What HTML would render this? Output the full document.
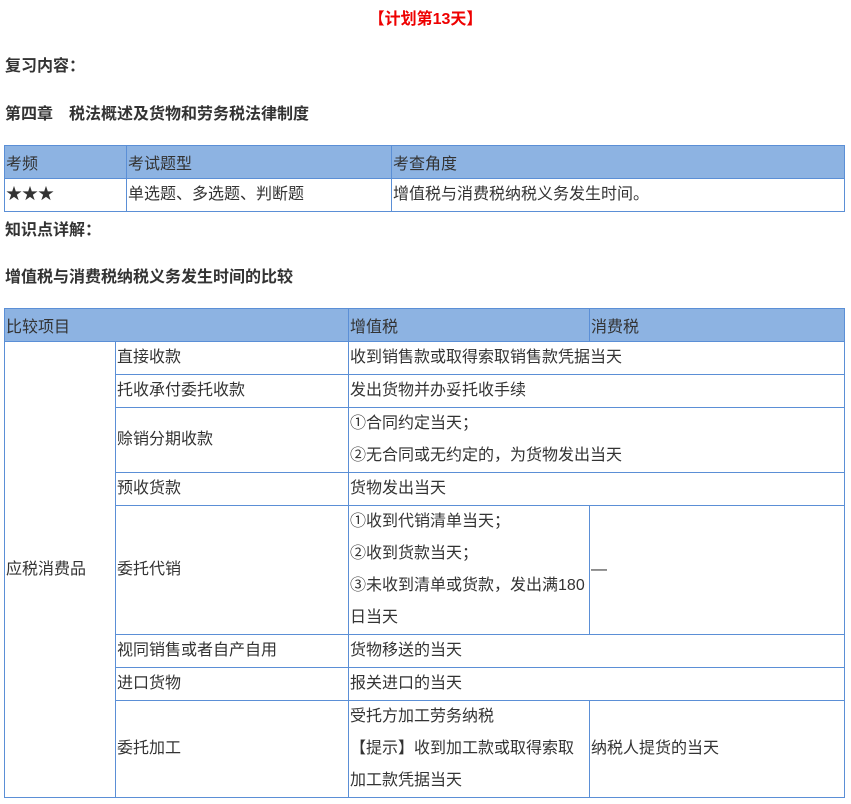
<!DOCTYPE html><html><head><meta charset="utf-8"><style>
body{margin:0;background:#fff;font-family:"Liberation Sans","Noto Sans CJK SC",sans-serif;font-size:16px;color:#333;width:851px;height:804px;overflow:hidden;position:relative}
.a{position:absolute}
table{position:absolute;border-collapse:collapse;table-layout:fixed}
td{border:1px solid #5b8fd6;padding:0 0 0 1px;vertical-align:middle;line-height:32px;white-space:nowrap;overflow:hidden}
th{background:#8db3e2;border:1px solid #5b8fd6;font-weight:normal;text-align:left;padding:0 0 0 1px;height:32px}
</style></head><body>
<div class="a" style="left:0;width:851px;top:5px;text-align:center;color:#e00;font-weight:bold">【计划第13天】</div>
<div class="a" style="left:5px;top:52px;font-weight:bold">复习内容：</div>
<div class="a" style="left:5px;top:100px;font-weight:bold">第四章　税法概述及货物和劳务税法律制度</div>
<table style="left:4px;top:145px;width:840px">
<colgroup><col style="width:122px"><col style="width:265px"><col style="width:453px"></colgroup>
<tr><th>考频</th><th>考试题型</th><th>考查角度</th></tr>
<tr><td>★★★</td><td>单选题、多选题、判断题</td><td>增值税与消费税纳税义务发生时间。</td></tr>
</table>
<div class="a" style="left:5px;top:216px;font-weight:bold">知识点详解：</div>
<div class="a" style="left:5px;top:263px;font-weight:bold">增值税与消费税纳税义务发生时间的比较</div>
<table style="left:4px;top:308px;width:840px">
<colgroup><col style="width:111px"><col style="width:233px"><col style="width:241px"><col style="width:255px"></colgroup>
<tr><th colspan="2">比较项目</th><th>增值税</th><th>消费税</th></tr>
<tr><td rowspan="8">应税消费品</td><td>直接收款</td><td colspan="2">收到销售款或取得索取销售款凭据当天</td></tr>
<tr><td>托收承付委托收款</td><td colspan="2">发出货物并办妥托收手续</td></tr>
<tr><td>赊销分期收款</td><td colspan="2">①合同约定当天；<br>②无合同或无约定的，为货物发出当天</td></tr>
<tr><td>预收货款</td><td colspan="2">货物发出当天</td></tr>
<tr><td>委托代销</td><td>①收到代销清单当天；<br>②收到货款当天；<br>③未收到清单或货款，发出满180<br>日当天</td><td>—</td></tr>
<tr><td>视同销售或者自产自用</td><td colspan="2">货物移送的当天</td></tr>
<tr><td>进口货物</td><td colspan="2">报关进口的当天</td></tr>
<tr><td>委托加工</td><td>受托方加工劳务纳税<br>【提示】收到加工款或取得索取<br>加工款凭据当天</td><td>纳税人提货的当天</td></tr>
</table>
</body></html>
